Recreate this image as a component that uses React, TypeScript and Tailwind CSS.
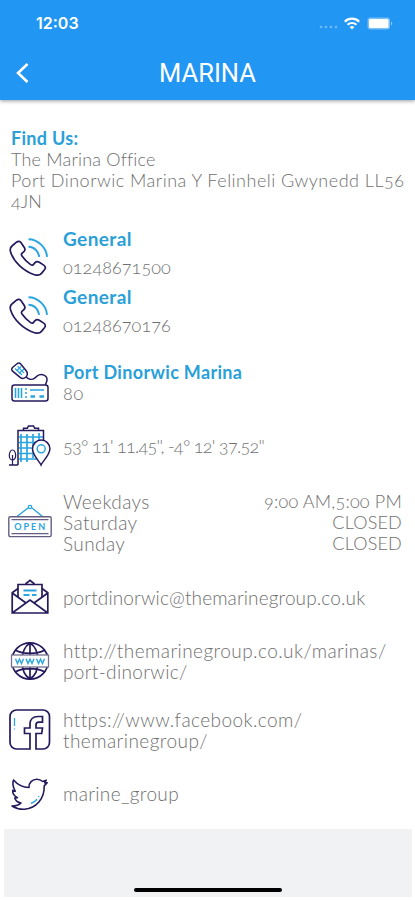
import type { ReactNode } from "react";

const NAVY = "#251a5c";
const SKY = "#2aa5e0";

const PhoneIcon = () => (
  <svg width="44" height="44" viewBox="0 0 44 44" fill="none" strokeWidth="1.7">
    <path
      d="M4.5 10.5 8.500 7.200c1.700-1.300 3.400-1 4.600.6l3.200 4.700c1.100 1.700.9 3-.6 4.300l-1.800 1.500c-.8.8-.6 1.700.1 2.700 2.200 3.200 5.100 6.200 8.600 8.600 1 .7 2 .8 2.700 0l1.700-2c1.200-1.300 2.700-1.400 4.300-.4l4.400 2.900c1.900 1.200 2.100 3 .8 4.600l-3 3.700c-1.500 1.800-4.200 2.200-7 1.300C15.500 36.300 5.500 26.500 2.600 17c-.9-2.700-.1-5 1.900-6.500Z"
      stroke={NAVY}
    />
    <path d="M20.500 4.200c9.500 0 18 8.500 18.500 17.700M20.500 11.800c5.700 0 10 4.400 10.700 10" stroke={SKY} strokeWidth="2" />
  </svg>
);

const RadioIcon = () => (
  <svg width="44" height="44" viewBox="0 0 44 44" fill="none" strokeWidth="1.500" stroke={NAVY}>
    <path d="M4.500 6.500 9 2.700c1.200-1 2.700-.8 3.700.3l5.700 7c1.300 2 1 4.700-.7 6.300-1.600 1.400-3.900 1.500-5.600.1l-7.500-6.200c-1.100-1-1.200-2.600-.1-3.700Z" />
    <path d="m7 7.500 7 6.500M9.500 5.200l6.500 7M8.500 10l4.500-4.500M11 12.500l5-4.500" stroke={SKY} strokeWidth="1.200" />
    <path d="M18 15.800c2 2.500 5.500 3.700 9 1l2-1.600c4.500-3.400 10.500-.7 10 4-.2 2-1 3.300-1.800 4.800" />
    <rect x="4" y="24" width="36" height="16" rx="2.500" />
    <path d="M7.500 27v10M10.500 27v10M13.500 27v10M17 28h2M17 32h2M17 36h2M22 29h14" stroke={SKY} strokeWidth="1.600" />
    <path d="M22.500 35.500h4.500M31.500 35.500h4.500" stroke={SKY} strokeWidth="2.500" />
  </svg>
);

const LocationIcon = () => (
  <svg width="44" height="44" viewBox="0 0 44 44" fill="none" strokeWidth="1.500" stroke={NAVY}>
    <path d="M13 10v28M19 10v28M25 10v24M31 9v9M11 13h24M11 18.500h20M11 24h18M11 29.500h19M11 35h21" stroke={SKY} strokeWidth="1.700" />
    <path d="M10 41V6.500h25.500V16M15.500 6V4.200h3.800L20.500 2h5l1.200 2.200h3.800V6M1 41h9" />
    <path d="M33 41c-1.600-3.700-8.500-9.800-8.500-16.200a8.700 8.700 0 0 1 17.400 0C41.900 31.200 34.500 37.300 33 41Z" fill="white" />
    <circle cx="33.200" cy="24.800" r="4" stroke={SKY} />
    <path d="M4.500 41V31M4.500 26c-2 0-3.200 3-3.200 5.500S2.700 36 4.500 36s3.200-2 3.200-4.500S6.500 26 4.500 26Z" strokeWidth="1.200" />
  </svg>
);

const OpenSignIcon = () => (
  <svg width="44" height="44" viewBox="0 0 44 44" fill="none">
    <path d="M9 16.500 20 8m4 0 10.500 8.500" stroke={SKY} strokeWidth="1.400" />
    <circle cx="22" cy="7" r="1.700" stroke={SKY} strokeWidth="1.300" />
    <rect x=".8" y="16.800" width="42.400" height="19.800" rx="1.500" stroke="#655e82" strokeWidth="1.400" />
    <path d="M3.500 19.700h37M3.500 33.700h37" stroke="#655e82" strokeWidth="1.200" />
    <text x="22.700" y="30" textAnchor="middle" fontSize="9" fontWeight="700" letterSpacing="2" fill={SKY} fontFamily="Lato, sans-serif">
      OPEN
    </text>
  </svg>
);

const MailIcon = () => (
  <svg width="44" height="44" viewBox="0 0 44 44" fill="none" strokeWidth="1.700" stroke={NAVY}>
    <path d="M10 22V9.500h24V22" />
    <path d="m17.500 9 4.500-3.700L26.500 9M10 13.500l-5.800 4.300V38h35.600V17.800L34 13.500M4.200 18 18 28M39.800 18 26 28M4.500 37.800 22 25l17.500 12.800" />
    <path d="M15.500 15.500h13M15.500 20h6M24 20h4.500" stroke={SKY} strokeWidth="1.800" />
  </svg>
);

const WebIcon = () => (
  <svg width="44" height="44" viewBox="0 0 44 44" fill="none" strokeWidth="1.700" stroke={NAVY}>
    <circle cx="22" cy="22" r="18.200" />
    <path d="M22 4v36M22 4c-5 3-8 10-8 18s3 15 8 18c5-3 8-10 8-18s-3-15-8-18ZM7.500 11.300c8 4.200 21 4.200 29 0M7.500 32.700c8-4.200 21-4.200 29 0" />
    <rect x="3.500" y="16" width="37" height="12" fill="white" stroke="#77718f" strokeWidth="1.300" />
    <path d="m7.500 19.700 2 4.800 2-4.300 2 4.300 2-4.800M18 19.700l2 4.800 2-4.300 2 4.300 2-4.800M28.500 19.700l2 4.800 2-4.300 2 4.300 2-4.800" stroke={SKY} strokeWidth="1.400" />
  </svg>
);

const FacebookIcon = () => (
  <svg width="44" height="44" viewBox="0 0 44 44" fill="none" strokeWidth="1.700" stroke={NAVY}>
    <path d="M22 41H8.500A6.500 6.500 0 0 1 2 34.500V8.500A6.500 6.500 0 0 1 8.500 2h26.500a6.500 6.500 0 0 1 6.500 6.500v26A6.500 6.500 0 0 1 35 41h-7V25.500h5.700l.8-5.500H28v-3c0-2 1-2.800 2.800-2.800h3.700V8.500H30c-5 0-8 3-8 7.500v4h-5.500v5.500H22V41Z" />
    <path d="M6.500 10v8M6.500 20.500v1" stroke={SKY} strokeWidth="1.300" />
  </svg>
);

const TwitterIcon = () => (
  <svg width="44" height="44" viewBox="0 0 44 44" fill="none" strokeWidth="1.600" stroke={NAVY} strokeLinejoin="round">
    <path d="M5.500 8c4.300 5 9.500 7.300 15.500 7.500-.5-4.700 3.500-8.300 7.700-8.300 2.500 0 4.600 1 6 2.300l3.500-1.300-1.500 2.700 2.500-.2-3 3.200C36.800 26.500 28 36.500 16.500 37.200c-4.600.2-9-1-12.500-3.200 3.800 0 7-1 9-3-3-.5-5.500-2.500-6.200-5l2.700-.3c-3-1.500-5-4.200-4.800-7.300l2.500.8C5 15 4 11.500 5.500 8Z" />
    <path d="M23 31.500c2.500-.9 4.500-2.300 6-4.200M30.500 25l.6-1" stroke={SKY} strokeWidth="1.400" />
  </svg>
);

interface InfoRowProps {
  icon: ReactNode;
  className: string;
  children: ReactNode;
}

const InfoRow = ({ icon, className, children }: InfoRowProps) => (
  <div className={`flex items-center gap-[11px] pl-2 pr-[13px] ${className}`}>
    <div className="w-11 shrink-0">{icon}</div>
    <div className="flex-1 whitespace-nowrap">{children}</div>
  </div>
);

const phones = ["01248671500", "01248670176"];

const hours = [
  { day: "Weekdays", time: "9:00 AM,5:00 PM" },
  { day: "Saturday", time: "CLOSED" },
  { day: "Sunday", time: "CLOSED" },
];

const Header = () => (
  <header className="relative h-[100px] bg-[#2196f3] text-white shadow-[0_1px_4px_rgba(0,0,0,0.4)]">
    <div className="flex h-[46px] items-center justify-between pl-9 pr-[22px] font-['Inter']">
      <span className="text-[16px] font-semibold">12:03</span>
      <div className="flex items-center">
        <svg className="mr-[7px] mt-2" width="18" height="4" viewBox="0 0 18 4" fill="white" opacity="0.35">
          <circle cx="2" cy="2" r="1.300" />
          <circle cx="7" cy="2" r="1.300" />
          <circle cx="12" cy="2" r="1.300" />
          <circle cx="17" cy="2" r="1.300" />
        </svg>
        <svg width="16" height="13" viewBox="0 0 16 13" fill="none" stroke="white" strokeWidth="2.200">
          <path d="M.8 4.700c4-4 10.400-4 14.400 0M3.600 7.800c2.500-2.400 6.300-2.400 8.800 0" />
          <path d="M5.700 10c1.300-1.200 3.300-1.200 4.600 0L8 12.500Z" fill="white" stroke="none" />
        </svg>
        <svg className="ml-[7px]" width="26" height="13" viewBox="0 0 26 13" fill="white">
          <rect x=".5" y=".5" width="22.500" height="12" rx="3" opacity="0.400" />
          <rect x="2" y="2" width="19.500" height="9" rx="1.500" />
          <path d="M24 4.500c1.700.6 1.700 3.400 0 4Z" opacity="0.500" />
        </svg>
      </div>
    </div>
    <div className="grid h-[54px] grid-cols-[48px_1fr_48px] items-center">
      <svg className="ml-[15px]" width="14" height="22" viewBox="0 0 14 22" fill="none" stroke="white" strokeWidth="2.600">
        <path d="M12.500 2 3 11l9.500 9" />
      </svg>
      <h1 className="pt-px text-center font-['Roboto'] text-[25.500px] font-normal">MARINA</h1>
    </div>
  </header>
);

export default function App() {
  return (
    <div className="flex h-[900px] w-[415px] flex-col overflow-hidden bg-white font-['Lato',sans-serif] text-[18px] font-light oldstyle-nums leading-[21px] text-[#6f6f6f]">
      <Header />
      <main className="flex-1">
        <section className="h-[128px] whitespace-nowrap pl-[11px] pt-[28px]">
          <h2 className="font-bold tracking-[0.300px] text-[#2a9fd8]">Find Us:</h2>
          <p className="tracking-[0.200px]">The Marina Office</p>
          <p className="tracking-[0.490px]">Port Dinorwic Marina Y Felinheli Gwynedd LL56</p>
          <p>4JN</p>
        </section>

        {phones.map((phone) => (
          <InfoRow key={phone} icon={<PhoneIcon />} className="h-[58px]">
            <p className="text-[19px] font-bold tracking-[0.400px] text-[#2a9fd8]">General</p>
            <p className="pb-2 pt-2 tracking-[0.080px]">{phone}</p>
          </InfoRow>
        ))}
        <InfoRow icon={<RadioIcon />} className="h-[78px]">
          <p className="font-bold tracking-[0.330px] text-[#2a9fd8]">Port Dinorwic Marina</p>
          <p className="tracking-[0.700px]">80</p>
        </InfoRow>
        <InfoRow icon={<LocationIcon />} className="h-12">
          <p className="tracking-[-0.700px]">53° 11' 11.45'', -4° 12' 37.52''</p>
        </InfoRow>
        <InfoRow icon={<OpenSignIcon />} className="h-[104px]">
          {hours.map(({ day, time }) => (
            <div key={day} className="flex justify-between">
              <span className="text-[19px] tracking-[0.400px]">{day}</span>
              <span className="tracking-[0.200px]">{time}</span>
            </div>
          ))}
        </InfoRow>
        <InfoRow icon={<MailIcon />} className="h-[46px] text-[19px]">
          <p className="tracking-[0.130px]">portdinorwic@themarinegroup.co.uk</p>
        </InfoRow>
        <InfoRow icon={<WebIcon />} className="h-[81px] text-[19px]">
          <p className="tracking-[0.440px]">http://themarinegroup.co.uk/marinas/</p>
          <p className="tracking-[0.350px]">port-dinorwic/</p>
        </InfoRow>
        <InfoRow icon={<FacebookIcon />} className="h-[57px] text-[19px]">
          <p className="tracking-[0.420px]">https://www.facebook.com/</p>
          <p className="tracking-[0.450px]">themarinegroup/</p>
        </InfoRow>
        <InfoRow icon={<TwitterIcon />} className="h-[71px] text-[19px]">
          <p className="tracking-[0.350px]">marine_group</p>
        </InfoRow>
      </main>
      <footer className="mb-[3px] ml-1 mr-[3px] flex h-[68px] items-end justify-center bg-[#f0f2f4] pb-[5px]">
        <div className="h-1 w-[148px] rounded-full bg-black" />
      </footer>
    </div>
  );
}
